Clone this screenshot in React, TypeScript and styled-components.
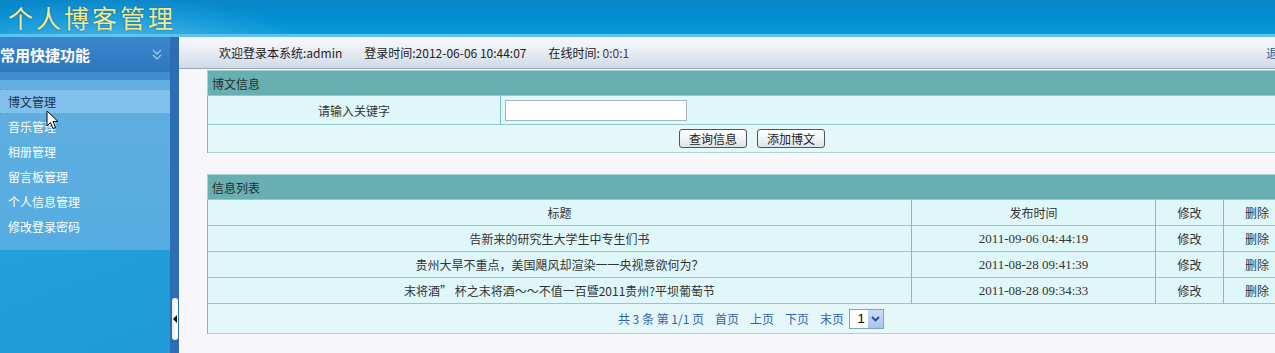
import { FC } from 'react';
import styled, { createGlobalStyle } from 'styled-components';

const GlobalStyle = createGlobalStyle`
  html, body {
    margin: 0;
    padding: 0;
    overflow: hidden;
    background: #f7f7fb;
  }
  body {
    font-family: "Noto Sans CJK SC", "Liberation Sans", sans-serif;
    font-size: 12px;
    color: #333;
  }
`

const Page = styled.div`
  width: 1300px;
  height: 353px;
  display: flex;
  flex-direction: column;
`

const Header = styled.div`
  height: 34px;
  flex-shrink: 0;
  display: flex;
  align-items: center;
  padding-left: 8px;
  background:
    radial-gradient(ellipse 260px 60px at 120px 40px, rgba(120, 200, 240, 0.55), rgba(0, 140, 210, 0) 70%),
    linear-gradient(180deg, #0a86c8 0%, #0090d4 60%, #0a9ad8 100%);
  border-bottom: 3px solid #5cc4ee;
`

const Title = styled.h1`
  margin: 0;
  font-size: 25px;
  font-weight: 400;
  letter-spacing: 3px;
  color: #f2e88c;
  text-shadow: 0 0 2px rgba(0, 60, 120, 0.6);
  font-family: "Noto Sans CJK SC", sans-serif;
`

const Body = styled.div`
  flex: 1;
  display: flex;
  min-height: 0;
`

const Sidebar = styled.div`
  width: 170px;
  flex-shrink: 0;
  display: flex;
  flex-direction: column;
  background: linear-gradient(160deg, #2ea2de 0%, #22a0dc 60%, #1f9ad6 100%);
`

const SideHead = styled.div`
  height: 35px;
  display: flex;
  align-items: center;
  justify-content: space-between;
  padding: 0 8px 0 0;
  color: #fff;
  font-size: 15px;
  font-weight: 700;
  background: linear-gradient(180deg, #3a86cc 0%, #2f78c0 100%);
`

const SideGap = styled.div`
  height: 8px;
  background: #3f8dcf;
`

const Menu = styled.ul`
  list-style: none;
  margin: 0;
  padding: 9px 0 11px;
  background: linear-gradient(180deg, #62aee0 0%, #55ace0 100%);
  position: relative;
`

const MenuItem = styled.li<{ $active?: boolean }>`
  height: 25px;
  line-height: 23px;
  box-sizing: border-box;
  padding-left: 8px;
  font-size: 12px;
  color: ${p => (p.$active ? '#1c2d55' : '#fff')};
  background: ${p => (p.$active ? '#80c0ea' : 'transparent')};
  border-top: 1px dotted ${p => (p.$active ? '#6a8fb0' : 'transparent')};
  border-bottom: 1px dotted ${p => (p.$active ? '#6a8fb0' : 'transparent')};
`

const Cursor = styled.svg`
  position: absolute;
  left: 46px;
  top: 30px;
`

const Splitter = styled.div`
  width: 9px;
  flex-shrink: 0;
  background: #2f6db3;
  display: flex;
  align-items: flex-end;
  justify-content: center;
  padding-bottom: 13px;
  box-sizing: border-box;
`

const Handle = styled.div`
  width: 6px;
  height: 42px;
  border-radius: 3px;
  background: linear-gradient(90deg, #e8eef6, #ffffff);
  display: flex;
  align-items: center;
  justify-content: center;
`

const Arrow = styled.span`
  width: 0;
  height: 0;
  border-top: 4px solid transparent;
  border-bottom: 4px solid transparent;
  border-right: 4px solid #111;
`

const Main = styled.div`
  flex: 1;
  display: flex;
  flex-direction: column;
  background: #f7f7fb;
`

const TopBar = styled.div`
  height: 31px;
  display: flex;
  align-items: center;
  gap: 22px;
  padding-left: 40px;
  border-top-left-radius: 7px;
  background: linear-gradient(180deg, #f8f8fc 0%, #e8ecf2 50%, #cfdae6 100%);
  border-bottom: 1px solid #9aa7b4;
  color: #222;
  font-size: 12px;
  position: relative;
`

const Online = styled.span`
  color: #4a3550;
`

const Logout = styled.span`
  margin-left: auto;
  margin-right: 10px;
  color: #2a5c9c;
`

const Content = styled.div`
  padding: 1px 0 0 28px;
  display: flex;
  flex-direction: column;
  gap: 21px;
`

const Panel = styled.table`
  width: 1084px;
  border-collapse: collapse;
  border: 1px solid #a8d2d4;
  font-size: 12px;
`

const PanelHead = styled.td`
  height: 24px;
  padding: 0 4px;
  background: #69afb1;
  color: #1f2f2f;
  text-align: left;
`

const Cell = styled.td<{ $serif?: boolean; $bg?: string }>`
  height: 25px;
  padding: 0;
  text-align: center;
  background: ${p => p.$bg || '#dff7f9'};
  border-top: 1px solid #93c8ca;
  border-left: 1px solid #7cbcbe;
  color: #333;
  font-family: ${p => (p.$serif ? '"Liberation Serif", serif' : 'inherit')};
  font-size: ${p => (p.$serif ? '13px' : '12px')};
`

const TextInput = styled.input`
  width: 182px;
  height: 21px;
  box-sizing: border-box;
  margin-left: 4px;
  border: 1px solid #a3b6c8;
  background: #fff;
  display: block;
`

const ButtonRow = styled.div`
  display: flex;
  justify-content: center;
  gap: 10px;
  padding-left: 6px;
`

const Button = styled.button`
  height: 19px;
  padding: 0 9px;
  font-size: 12px;
  font-family: inherit;
  color: #222;
  border: 1px solid #4d5560;
  border-radius: 3px;
  background: linear-gradient(180deg, #ffffff 0%, #eef1f4 60%, #dde2e8 100%);
  line-height: 15px;
`

const Pager = styled.div`
  display: flex;
  align-items: center;
  justify-content: center;
  gap: 11px;
  padding-left: 4px;
  color: #2f62b0;
  font-size: 12px;
`

const Select = styled.div`
  display: flex;
  align-items: stretch;
  height: 20px;
  width: 35px;
  box-sizing: border-box;
  border: 1px solid #8aa0c0;
  background: #fff;
  margin-left: -6px;
`

const SelectVal = styled.span`
  flex: 1;
  padding-left: 4px;
  color: #000;
  font-size: 13px;
  line-height: 18px;
  font-family: "Liberation Sans", sans-serif;
`

const SelectBtn = styled.span`
  width: 15px;
  background: linear-gradient(180deg, #c9dcf6, #a9c4ea);
  display: flex;
  align-items: center;
  justify-content: center;
`

interface IPost {
  title: string;
  time: string;
}

const posts: IPost[] = [
  { title: '告新来的研究生大学生中专生们书', time: '2011-09-06 04:44:19' },
  { title: '贵州大旱不重点，美国飓风却渲染一一央视意欲何为？', time: '2011-08-28 09:41:39' },
  { title: '末将酒” 杯之末将酒～～不值一百暨2011贵州?平坝葡萄节', time: '2011-08-28 09:34:33' },
];

const menu = ['博文管理', '音乐管理', '相册管理', '留言板管理', '个人信息管理', '修改登录密码'];

const App: FC = () => {
  return (
    <Page>
      <GlobalStyle />
      <Header>
        <Title>个人博客管理</Title>
      </Header>
      <Body>
        <Sidebar>
          <SideHead>
            <span>常用快捷功能</span>
            <svg width="10" height="12" viewBox="0 0 10 12">
              <path d="M1 1 L5 5 L9 1 M1 6 L5 10 L9 6" stroke="#9cc6ea" strokeWidth="1.4" fill="none" />
            </svg>
          </SideHead>
          <SideGap />
          <Menu>
            {menu.map((m, i) => (
              <MenuItem key={m} $active={i === 0}>{m}</MenuItem>
            ))}
            <Cursor width="13" height="20" viewBox="0 0 13 20">
              <path d="M1 1 L1 16 L4.5 12.5 L7 18.5 L9.5 17.5 L7 11.5 L12 11.5 Z" fill="#fff" stroke="#000" strokeWidth="1" />
            </Cursor>
          </Menu>
        </Sidebar>
        <Splitter>
          <Handle><Arrow /></Handle>
        </Splitter>
        <Main>
          <TopBar>
            <span>欢迎登录本系统:admin</span>
            <span>登录时间:2012-06-06 10:44:07</span>
            <span>在线时间: <Online>0:0:1</Online></span>
            <Logout>退出</Logout>
          </TopBar>
          <Content>
            <Panel>
              <tbody>
                <tr><PanelHead colSpan={2}>博文信息</PanelHead></tr>
                <tr>
                  <Cell style={{ width: 292, height: 28 }}>请输入关键字</Cell>
                  <Cell style={{ textAlign: 'left' }}><TextInput /></Cell>
                </tr>
                <tr>
                  <Cell colSpan={2} $bg="#e6f7f9" style={{ height: 27 }}>
                    <ButtonRow>
                      <Button>查询信息</Button>
                      <Button>添加博文</Button>
                    </ButtonRow>
                  </Cell>
                </tr>
              </tbody>
            </Panel>
            <Panel>
              <tbody>
                <tr><PanelHead colSpan={4}>信息列表</PanelHead></tr>
                <tr>
                  <Cell style={{ width: 703 }}>标题</Cell>
                  <Cell style={{ width: 243 }}>发布时间</Cell>
                  <Cell style={{ width: 67 }}>修改</Cell>
                  <Cell>删除</Cell>
                </tr>
                {posts.map(p => (
                  <tr key={p.time}>
                    <Cell>{p.title}</Cell>
                    <Cell $serif>{p.time}</Cell>
                    <Cell>修改</Cell>
                    <Cell>删除</Cell>
                  </tr>
                ))}
                <tr>
                  <Cell colSpan={4} $bg="#e6f7f9" style={{ height: 29 }}>
                    <Pager>
                      <span>共 3 条 第 1/1 页</span>
                      <span>首页</span>
                      <span>上页</span>
                      <span>下页</span>
                      <span>末页</span>
                      <Select>
                        <SelectVal>1</SelectVal>
                        <SelectBtn>
                          <svg width="9" height="6" viewBox="0 0 9 6">
                            <path d="M1 1 L4.5 4.5 L8 1" stroke="#2a4a80" strokeWidth="1.8" fill="none" />
                          </svg>
                        </SelectBtn>
                      </Select>
                    </Pager>
                  </Cell>
                </tr>
              </tbody>
            </Panel>
          </Content>
        </Main>
      </Body>
    </Page>
  );
};

export default App;
